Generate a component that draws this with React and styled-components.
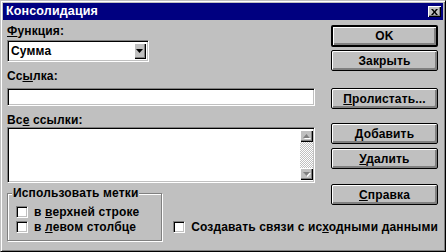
import React from 'react';
import styled, { createGlobalStyle } from 'styled-components';

const GlobalStyle = createGlobalStyle`
  html, body {
    margin: 0;
    padding: 0;
    background: #c0c0c0;
  }
  body {
    font-family: "Liberation Sans", Arial, sans-serif;
    font-size: 12px;
    font-weight: bold;
    letter-spacing: 0.15px;
    color: #000;
  }
`;

const Window = styled.div`
  box-sizing: border-box;
  width: 446px;
  height: 252px;
  background: #c0c0c0;
  border: 1px solid;
  border-color: #c0c0c0 #000 #000 #c0c0c0;
  box-shadow: inset 1px 1px 0 #fff, inset -1px -1px 0 #808080;
  padding: 2px;
  display: flex;
  flex-direction: column;
`;

const TitleBar = styled.div`
  height: 17px;
  flex-shrink: 0;
  background: #000080;
  color: #fff;
  display: flex;
  align-items: center;
  justify-content: space-between;
  padding: 0 2px 0 3px;
  line-height: 17px;
  font-size: 12.5px;
`;

const CloseBtn = styled.div`
  box-sizing: border-box;
  width: 13px;
  height: 11px;
  background: #c0c0c0;
  display: flex;
  align-items: center;
  justify-content: center;
  box-shadow: inset 1px 1px 0 #fff, inset -1px -1px 0 #000, inset -2px -2px 0 #808080;
`;

const Body = styled.div`
  flex: 1;
  display: grid;
  grid-template-columns: 308px 107px;
  grid-template-rows: auto 1fr;
  column-gap: 16px;
  padding: 4px 0 0 4px;
`;

const Main = styled.div`
  grid-column: 1;
  grid-row: 1;
  display: flex;
  flex-direction: column;
  align-items: flex-start;
`;

const Label = styled.div`
  line-height: 14px;
  height: 14px;
  margin-top: ${p => p.$top || 0}px;
  margin-bottom: ${p => p.$bottom || 0}px;
  white-space: nowrap;
`;

const Sunken = styled.div`
  box-sizing: border-box;
  background: #fff;
  border: 1px solid;
  border-color: #808080 #fff #fff #808080;
  box-shadow: inset 1px 1px 0 #000, inset -1px -1px 0 #c0c0c0;
`;

const Combo = styled(Sunken)`
  width: 142px;
  height: 22px;
  display: flex;
  align-items: stretch;
  padding: 2px;
`;

const ComboText = styled.div`
  flex: 1;
  padding-left: 1px;
  line-height: 16px;
`;

const ArrowBtn = styled.div`
  width: 12px;
  background: #c0c0c0;
  display: flex;
  align-items: center;
  justify-content: center;
  box-shadow: inset 1px 1px 0 #fff, inset -1px -1px 0 #000, inset -2px -2px 0 #808080;
`;

const Field = styled(Sunken)`
  width: 308px;
  height: 18px;
  margin-top: 5px;
`;

const List = styled(Sunken)`
  width: 308px;
  height: 56px;
  display: flex;
  justify-content: flex-end;
  padding: 2px 1px 2px 2px;
`;

const Scroll = styled.div`
  width: 13px;
  display: flex;
  flex-direction: column;
`;

const ScrollBtn = styled.div`
  height: 12px;
  background: #c0c0c0;
  display: flex;
  align-items: center;
  justify-content: center;
  box-shadow: inset 1px 1px 0 #fff, inset -1px -1px 0 #000, inset -2px -2px 0 #808080;
`;

const Track = styled.div`
  flex: 1;
  background-image: repeating-conic-gradient(#c0c0c0 0 25%, #fff 0 50%);
  background-size: 2px 2px;
`;

const Buttons = styled.div`
  grid-column: 2;
  grid-row: 1 / span 2;
  display: flex;
  flex-direction: column;
  align-self: start;
`;

const Button = styled.div`
  box-sizing: border-box;
  height: ${p => (p.$default ? 22 : 21)}px;
  margin-top: ${p => p.$top || 0}px;
  border: ${p => (p.$default ? 2 : 1)}px solid #000;
  border-radius: 2px;
  background: #c0c0c0;
  box-shadow: inset 1px 1px 0 #fff, inset -2px -2px 0 #808080;
  display: flex;
  align-items: center;
  justify-content: center;
  line-height: 14px;
`;

const Bottom = styled.div`
  grid-column: 1 / span 2;
  grid-row: 2;
  display: flex;
  align-items: flex-start;
  margin-top: 3px;
`;

const Group = styled.fieldset`
  box-sizing: border-box;
  width: 157px;
  height: 55px;
  margin: 0;
  padding: 4px 0 0 8px;
  border: 1px solid #808080;
  box-shadow: 1px 1px 0 #fff, inset 1px 1px 0 #fff;
`;

const Legend = styled.legend`
  padding: 0 1px;
  margin-left: -4px;
  line-height: 14px;
  background: #c0c0c0;
`;

const CheckRow = styled.label`
  display: flex;
  align-items: center;
  height: 15px;
  gap: 6px;
  white-space: nowrap;
  margin-left: ${p => p.$left || 0}px;
  margin-top: ${p => p.$top || 0}px;
`;

const Box = styled(Sunken)`
  width: 12px;
  height: 12px;
  flex-shrink: 0;
`;

const Arrow = ({ down, dim }) => (
  <svg width="8" height="5" viewBox="0 0 8 5">
    {dim && <path d={down ? 'M1 1h7L4.5 5z' : 'M4.5 1L8 5H1z'} fill="#fff" />}
    <path d={down ? 'M0 0h7L3.5 4z' : 'M3.5 0L7 4H0z'} fill={dim ? '#808080' : '#000'} />
  </svg>
);

export default function App() {
  return (
    <>
      <GlobalStyle />
      <Window>
        <TitleBar>
          <span>Консолидация</span>
          <CloseBtn>
            <svg width="7" height="6" viewBox="0 0 7 6">
              <path d="M0 0h2l1.5 2L5 0h2L4.5 3 7 6H5L3.5 4 2 6H0l2.5-3z" fill="#000" />
            </svg>
          </CloseBtn>
        </TitleBar>
        <Body>
          <Main>
            <Label $bottom={2}><u>Ф</u>ункция:</Label>
            <Combo>
              <ComboText>Сумма</ComboText>
              <ArrowBtn><Arrow down /></ArrowBtn>
            </Combo>
            <Label $top={7}>Сс<u>ы</u>лка:</Label>
            <Field />
            <Label $top={7}>Вс<u>е</u> ссылки:</Label>
            <List>
              <Scroll>
                <ScrollBtn><Arrow dim /></ScrollBtn>
                <Track />
                <ScrollBtn><Arrow down dim /></ScrollBtn>
              </Scroll>
            </List>
          </Main>
          <Buttons>
            <Button $default $top={1}>OK</Button>
            <Button $top={3}>Закрыть</Button>
            <Button $top={17}><span><u>П</u>ролистать...</span></Button>
            <Button $top={14}><span><u>Д</u>обавить</span></Button>
            <Button $top={4}><span><u>У</u>далить</span></Button>
            <Button $top={15}><span><u>С</u>правка</span></Button>
          </Buttons>
          <Bottom>
            <Group>
              <Legend>Использовать метки</Legend>
              <CheckRow><Box /><span>в <u>в</u>ерхней строке</span></CheckRow>
              <CheckRow><Box /><span>в <u>л</u>евом столбце</span></CheckRow>
            </Group>
            <CheckRow $left={11} $top={33}>
              <Box />
              <span>Создавать связи с ис<u>х</u>одными данными</span>
            </CheckRow>
          </Bottom>
        </Body>
      </Window>
    </>
  );
}
